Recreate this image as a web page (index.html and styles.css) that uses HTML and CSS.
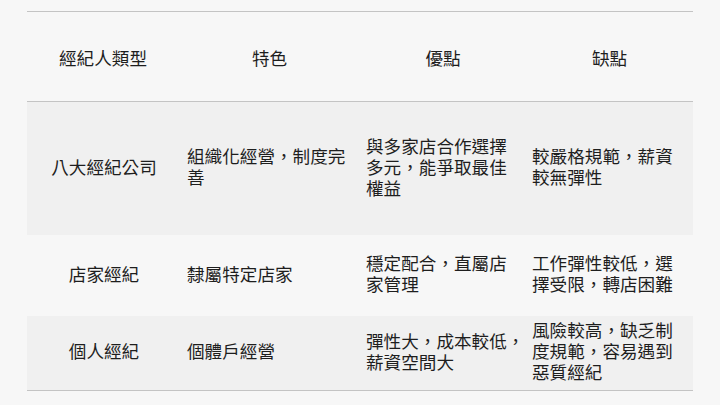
FILE: index.html
```html
<!DOCTYPE html>
<html lang="zh-Hant">
<head>
<meta charset="utf-8">
<link rel="stylesheet" href="styles.css">
</head>
<body>
<div class="page">
<table class="compare">
  <colgroup>
    <col class="c1"><col class="c2"><col class="c3"><col class="c4">
  </colgroup>
  <thead>
    <tr class="head">
      <th>經紀人類型</th>
      <th>特色</th>
      <th>優點</th>
      <th>缺點</th>
    </tr>
  </thead>
  <tbody>
    <tr class="r1 stripe">
      <td class="type">八大經紀公司</td>
      <td class="feat">組織化經營，制度完善</td>
      <td class="pro">與多家店合作選擇多元，能爭取最佳權益</td>
      <td class="con">較嚴格規範，薪資較無彈性</td>
    </tr>
    <tr class="r2">
      <td class="type">店家經紀</td>
      <td class="feat">隸屬特定店家</td>
      <td class="pro">穩定配合，直屬店家管理</td>
      <td class="con">工作彈性較低，選擇受限，轉店困難</td>
    </tr>
    <tr class="r3 stripe">
      <td class="type">個人經紀</td>
      <td class="feat">個體戶經營</td>
      <td class="pro wide">彈性大，成本較低，薪資空間大</td>
      <td class="con">風險較高，缺乏制度規範，容易遇到惡質經紀</td>
    </tr>
  </tbody>
</table>
</div>
</body>
</html>
```

FILE: styles.css
```css
html, body {
  margin: 0;
  padding: 0;
  background: #f7f7f7;
}
body {
  width: 720px;
  height: 405px;
  overflow: hidden;
  font-family: "Noto Sans CJK SC", "Noto Sans CJK TC", "Noto Sans", sans-serif;
  color: #1e1e1e;
}
.page {
  padding: 11px 0 0 27px;
}
.compare {
  width: 666px;
  border-collapse: collapse;
  table-layout: fixed;
  font-size: 17.6px;
  line-height: 21px;
}
.c1 { width: 152px; }
.c2 { width: 181px; }
.c3 { width: 166px; }
.c4 { width: 167px; }

.compare thead tr {
  border-top: 1px solid #c4c4c4;
  border-bottom: 1px solid #c4c4c4;
}
.compare tbody {
  border-bottom: 1px solid #c4c4c4;
}
.compare th {
  font-weight: normal;
  text-align: center;
  padding: 2px 8px 0;
  height: 87px;
  vertical-align: middle;
}
.compare td {
  padding: 0 6px 5px 8px;
  vertical-align: middle;
  text-align: left;
}
.compare td.type {
  text-align: center;
}
.compare td.pro {
  padding: 0 8px 5px 6px;
}
.compare td.pro.wide {
  padding-right: 0;
}
.compare td.con {
  padding: 0 8px 5px 6px;
}
.r1 td { height: 128px; }
.r2 td { height: 76px; }
.r3 td { height: 69px; }
.stripe {
  background: #f0f0f0;
}
```
